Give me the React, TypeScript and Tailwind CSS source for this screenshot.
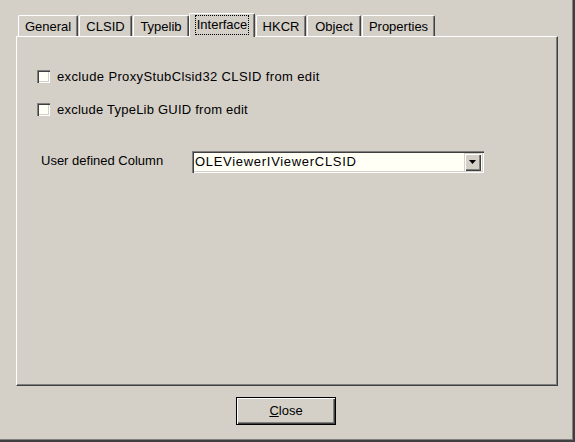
import React from "react";

const tabs = [
  { label: "General", w: "w-[60px]", ml: "ml-0" },
  { label: "CLSID", w: "w-[53px]", ml: "ml-px" },
  { label: "Typelib", w: "w-[56px]", ml: "ml-px" },
  { label: "Interface", w: "w-[66px]", ml: "ml-0", active: true },
  { label: "HKCR", w: "w-[50px]", ml: "ml-px" },
  { label: "Object", w: "w-[54px]", ml: "ml-px" },
  { label: "Properties", w: "w-[73px]", ml: "ml-px" },
];

const sunken =
  "shadow-[inset_1px_1px_0_#808080,inset_2px_2px_0_#404040,inset_-1px_-1px_0_#ffffff,inset_-2px_-2px_0_#d4d0c8]";

const Check: React.FC<{ label: string; className?: string; textClass?: string }> = ({
  label,
  className,
  textClass,
}) => (
  <label className={`flex items-center h-[13px] gap-[7px] ${className ?? ""}`}>
    <span className={`w-[13px] h-[13px] bg-[#fffff6] ${sunken}`} />
    <span className={`leading-[16px] ${textClass ?? ""}`}>{label}</span>
  </label>
);

const App: React.FC = () => {
  return (
    <div
      className="w-[575px] h-[442px] bg-[#d4d0c8] text-black text-[13px] flex flex-col pt-[13px] pl-[16px] shadow-[inset_-2px_-2px_0_#404040,inset_-3px_-3px_0_#808080]"
      style={{ fontFamily: '"Liberation Sans", Arial, sans-serif' }}
    >
      {/* tab strip */}
      <div className="flex items-end h-[23px] ml-[2px]">
        {tabs.map((t) =>
          t.active ? (
            <div
              key={t.label}
              className={`${t.w} ${t.ml} h-[24px] -mb-px relative z-10 bg-[#d4d0c8] border-l border-t border-white border-r border-r-[#404040] rounded-t-[2px] shadow-[inset_-1px_0_0_#808080] flex justify-center pt-[1px]`}
            >
              <span className="h-[20px] px-[1px] border border-dotted border-black leading-[17px]">
                {t.label}
              </span>
            </div>
          ) : (
            <div
              key={t.label}
              className={`${t.w} ${t.ml} h-[21px] bg-[#d4d0c8] border-l border-t border-white border-r border-r-[#404040] rounded-t-[2px] shadow-[inset_-1px_0_0_#808080] flex justify-center pt-[3px] leading-[16px]`}
            >
              {t.label}
            </div>
          )
        )}
      </div>

      {/* tab page */}
      <div className="w-[542px] h-[350px] border-l border-t border-white border-r border-b border-r-[#404040] border-b-[#404040] shadow-[inset_-1px_-1px_0_#808080] flex flex-col">
        <Check
          label="exclude ProxyStubClsid32 CLSID from edit"
          className="mt-[33px] ml-[20px]"
          textClass="tracking-[0.37px]"
        />
        <Check
          label="exclude TypeLib GUID from edit"
          className="mt-[20px] ml-[20px]"
          textClass="tracking-[0.23px]"
        />

        <div className="flex items-center mt-[35px] ml-[24px] h-[22px]">
          <span className="w-[151px] leading-[16px] -mt-[2px]">User defined Column</span>
          <div className={`w-[292px] h-[22px] bg-[#fffff6] ${sunken} flex items-center p-[2px]`}>
            <span className="flex-1 pl-[1px] leading-[16px] tracking-[0.7px]">OLEViewerIViewerCLSID</span>
            <div className="w-[17px] h-[18px] mr-px bg-[#d4d0c8] flex items-center justify-center shadow-[inset_1px_1px_0_#d4d0c8,inset_2px_2px_0_#ffffff,inset_-1px_-1px_0_#404040,inset_-2px_-2px_0_#808080]">
              <svg width="7" height="4" viewBox="0 0 7 4">
                <path d="M0 0h7L3.5 4z" fill="#000" />
              </svg>
            </div>
          </div>
        </div>
      </div>

      {/* footer */}
      <div className="flex justify-center w-[542px] mt-[11px] -ml-[1px]">
        <button className="w-[100px] h-[28px] border border-black bg-[#d4d0c8] shadow-[inset_1px_1px_0_#ffffff,inset_-1px_-1px_0_#404040,inset_-2px_-2px_0_#808080] flex items-center justify-center leading-[16px]">
          <span>
            <span className="underline">C</span>lose
          </span>
        </button>
      </div>
    </div>
  );
};

export default App;
